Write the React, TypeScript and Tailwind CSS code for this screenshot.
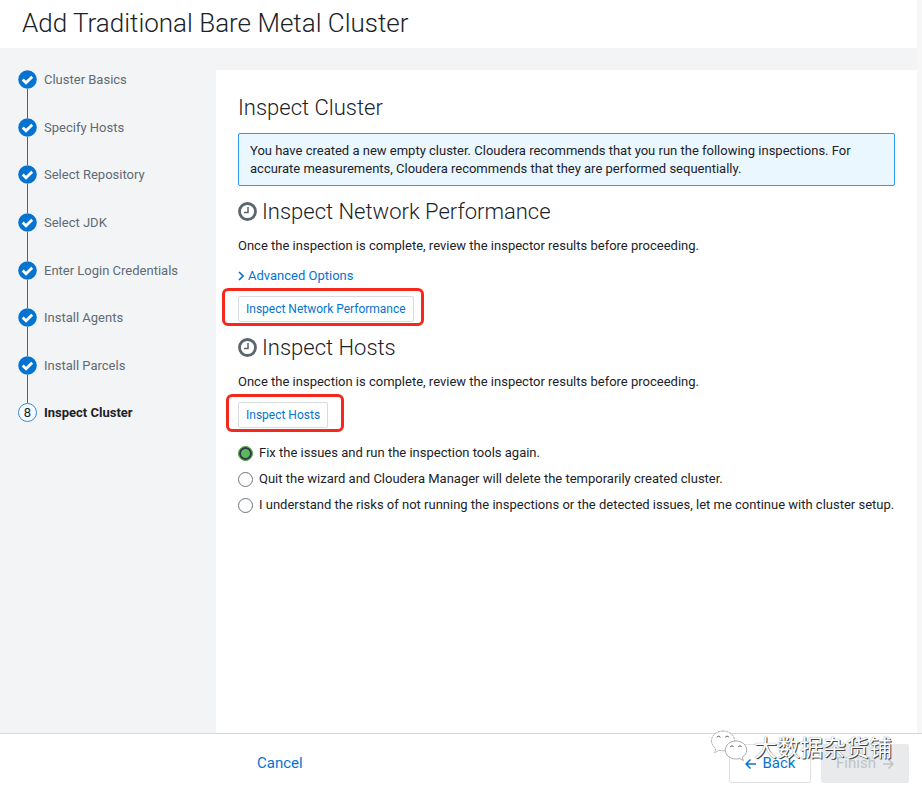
import React, { useState } from 'react';

const doneSteps = [
  'Cluster Basics',
  'Specify Hosts',
  'Select Repository',
  'Select JDK',
  'Enter Login Credentials',
  'Install Agents',
  'Install Parcels',
];

const choices = [
  { id: 'fix', label: 'Fix the issues and run the inspection tools again.' },
  { id: 'quit', label: 'Quit the wizard and Cloudera Manager will delete the temporarily created cluster.' },
  {
    id: 'continue',
    label:
      'I understand the risks of not running the inspections or the detected issues, let me continue with cluster setup.',
  },
];

const ClockIcon = () => (
  <svg viewBox="0 0 20 20" className="h-5 w-5 shrink-0" fill="none" stroke="#5a656d" aria-hidden="true">
    <circle cx="9.500" cy="9.500" r="8" strokeWidth="2.800" />
    <path d="M10 5v5.500H6" strokeWidth="1.5" />
  </svg>
);

const CheckBadge = () => (
  <svg viewBox="0 0 19 19" className="h-[19px] w-[19px]" aria-hidden="true">
    <circle cx="9.500" cy="9.500" r="9.300" fill="#0574d0" />
    <path d="M4.700 9.600l3.300 3.200 6.200-6.100" fill="none" stroke="#fff" strokeWidth="2.800" />
  </svg>
);

const Arrow: React.FC<{ back?: boolean }> = ({ back }) => (
  <svg
    viewBox="0 0 12 12"
    className={back ? 'h-3 w-3 rotate-180' : 'h-3 w-3'}
    fill="none"
    stroke="currentColor"
    strokeWidth="1.5"
    aria-hidden="true"
  >
    <path d="M1 6h10M6.500 1.500L11 6l-4.500 4.500" />
  </svg>
);

const Steps = () => (
  <ol className="flex h-[381px] flex-col text-[13px] leading-[19px] text-[#5f6b74]">
    {doneSteps.map((step) => (
      <li key={step} className="flex flex-1 gap-[7px]">
        <div className="flex flex-col items-center">
          <CheckBadge />
          <span className="w-px flex-1 bg-[#0574d0]" />
        </div>
        <span>{step}</span>
      </li>
    ))}
    <li className="flex flex-1 items-start gap-[7px] font-bold text-[#1b2329]" aria-current="step">
      <span className="flex h-[19px] w-[19px] items-center justify-center rounded-full border border-[#2f8fe0] bg-[#f5faff] font-normal">
        8
      </span>
      <span>Inspect Cluster</span>
    </li>
  </ol>
);

const Watermark = () => (
  <div className="pointer-events-none absolute -top-[5px] right-[30px] flex items-center gap-1.5">
    <svg viewBox="0 0 38 34" className="h-[34px] w-[38px]" fill="#fff" stroke="#999" strokeWidth="0.8" aria-hidden="true">
      <path
        d="M13 2C6.500 2 1.500 6.400 1.500 11.800c0 3.200 1.700 6 4.300 7.900l-1.200 4 4.500-2.400c1.300.4 2.600.5 4 .5 6.600 0 11.500-4.500 11.500-10S19.600 2 13 2z"
        strokeDasharray="2.500 0.700"
      />
      <path d="M26 12c-6 0-10.700 4-10.700 9S20 30 26 30c1.300 0 2.500-.2 3.600-.5l3.700 2-1-3.300c2.600-1.700 4.400-4.300 4.400-7.200 0-5-4.700-9-10.700-9z" />
      <path
        d="M7 8.500a1.600 1.300 0 0 1 3.200 0M15.500 8.500a1.600 1.300 0 0 1 3.200 0M20.500 18a1.400 1.200 0 0 1 2.800 0M28.500 18a1.400 1.200 0 0 1 2.800 0"
        stroke="#444"
      />
    </svg>
    <span className="font-['Noto_Sans_CJK_SC',sans-serif] text-[23px] leading-8 text-white [text-shadow:1px_1px_0_#444,0_0_1px_#777]">
      大数据杂货铺
    </span>
  </div>
);

export default function App() {
  const [choice, setChoice] = useState('fix');

  return (
    <div className="flex min-h-screen flex-col bg-white font-[Roboto,sans-serif] text-[13px] text-[#1b2329]">
      <div className="flex flex-1 flex-col border-r-[5px] border-[#f7f7f8]">
        <header className="px-[22px] pt-[5px] pb-[7px]">
          <h1 className="text-[26px] leading-9 font-light">Add Traditional Bare Metal Cluster</h1>
        </header>

        <div className="flex flex-1 bg-[#f3f4f6] pt-[22px]">
          <aside className="w-54 shrink-0 pl-[18px]">
            <Steps />
          </aside>

          <main className="min-w-0 flex-1 bg-white px-[22px] pt-[22px]">
            <h2 className="text-[22px] leading-8 font-light">Inspect Cluster</h2>

            <div className="mt-[9px] rounded-xs border border-[#2f97ee] bg-[#ebf7ff] px-[11px] pt-2 pb-[7px] leading-[18px]">
              You have created a new empty cluster. Cloudera recommends that you run the following inspections. For
              accurate measurements, Cloudera recommends that they are performed sequentially.
            </div>

            <h2 className="mt-2.5 flex items-center gap-1 text-[22px] leading-8 font-light">
              <ClockIcon />
              Inspect Network Performance
            </h2>
            <p className="mt-2 leading-5">
              Once the inspection is complete, review the inspector results before proceeding.
            </p>
            <button type="button" className="mt-2.5 flex items-center gap-1 leading-5 text-[#0574d0]">
              <svg viewBox="0 0 6 10" className="h-2.5 w-1.5" fill="none" stroke="currentColor" strokeWidth="1.6" aria-hidden="true">
                <path d="M1 1l4 4-4 4" />
              </svg>
              Advanced Options
            </button>
            <div className="relative mt-2.5 w-fit">
              <button type="button" className="block rounded-xs border border-[#d9dcdf] px-[7px] text-xs leading-6 text-[#0574d0]">
                Inspect Network Performance
              </button>
              <span className="pointer-events-none absolute -top-2 -right-2.5 -bottom-1 -left-4 rounded-md border-[3px] border-[#f5281e]" />
            </div>

            <h2 className="mt-2.5 flex items-center gap-1 text-[22px] leading-8 font-light">
              <ClockIcon />
              Inspect Hosts
            </h2>
            <p className="mt-2 leading-5">
              Once the inspection is complete, review the inspector results before proceeding.
            </p>
            <div className="relative mt-2.5 w-fit">
              <button type="button" className="block rounded-xs border border-[#d9dcdf] px-[7px] text-xs leading-6 text-[#0574d0]">
                Inspect Hosts
              </button>
              <span className="pointer-events-none absolute -top-2 -right-4 -bottom-1 -left-3 rounded-md border-[3px] border-[#f5281e]" />
            </div>

            <div className="-mr-3 mt-[15px] space-y-1.5">
              {choices.map((c) => (
                <label key={c.id} className="flex items-center gap-1.5 leading-5">
                  <input
                    type="radio"
                    name="next"
                    checked={choice === c.id}
                    onChange={() => setChoice(c.id)}
                    className="h-[15px] w-[15px] shrink-0 appearance-none rounded-full border border-[#6b757d] bg-white checked:border-[#4f9a45] checked:bg-[#5cb85c] checked:inset-shadow-[0_0_0_2px_#30393f]"
                  />
                  {c.label}
                </label>
              ))}
            </div>
          </main>
        </div>
      </div>

      <footer className="relative flex items-start justify-between border-t border-[#d5d8db] pt-2.5 pr-[13px] pb-1.5 pl-[257px] text-[15px]">
        <button type="button" className="leading-[38px] text-[#0574d0]">
          Cancel
        </button>
        <div className="flex gap-2.5">
          <button type="button" className="flex h-[39px] w-[82px] items-center justify-center gap-1.5 rounded-xs border border-[#dfe1e4] text-[#0574d0]">
            <Arrow back />
            Back
          </button>
          <button type="button" disabled className="flex h-[39px] w-[88px] items-center justify-center gap-1.5 rounded-xs bg-[#e9eaec] text-[#bfc3c7]">
            Finish
            <Arrow />
          </button>
        </div>
        <Watermark />
      </footer>
    </div>
  );
}
